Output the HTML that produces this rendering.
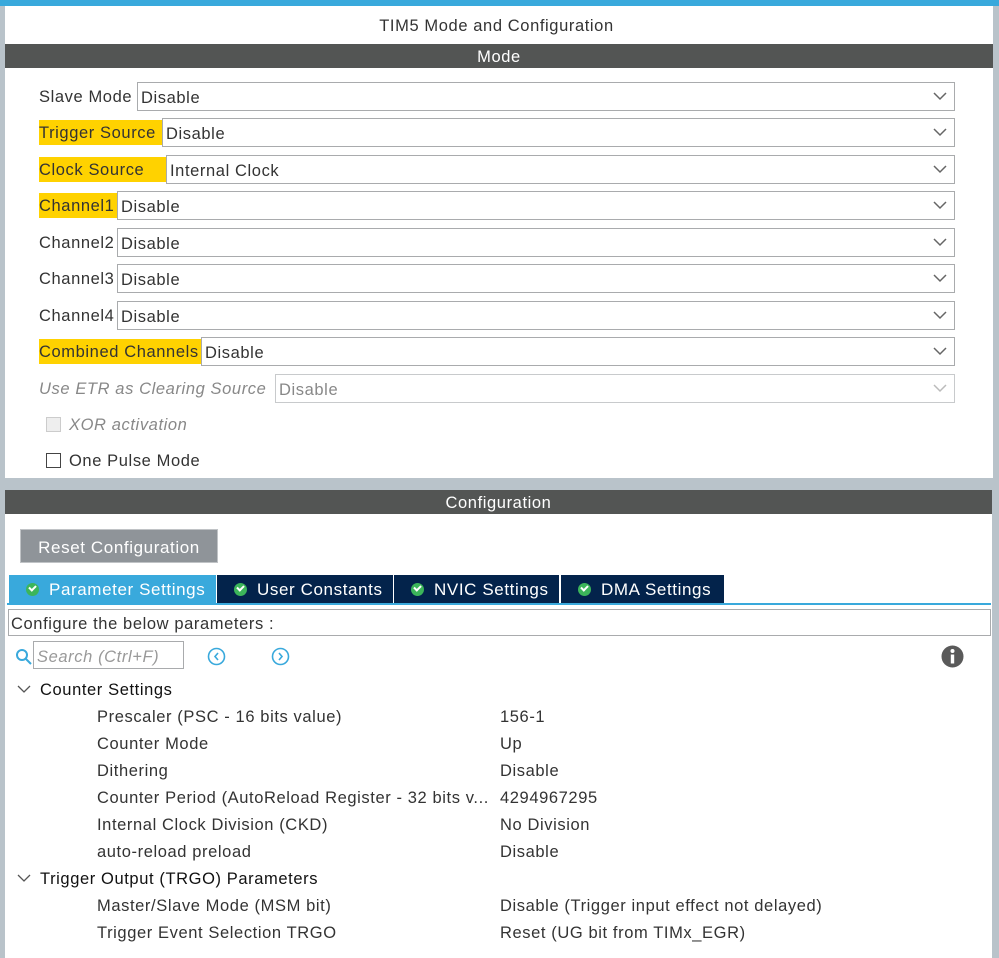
<!DOCTYPE html><html><head><style>
body{margin:0;width:999px;height:958px;background:#b9c3ca;position:relative;overflow:hidden;font-family:"Liberation Sans",sans-serif;font-size:16.5px;letter-spacing:0.6px;color:#333}
.a{position:absolute}
.top{left:0;top:0;width:999px;height:6px;background:#39a9dc}
.panel{background:#fff}
.hdr{background:#535554;color:#fff;text-align:center;height:24px;line-height:26px}
.lab{position:absolute;left:39px;height:25px;line-height:27px;white-space:nowrap}
.hl{background:#ffd200}
.sel{position:absolute;right:44px;height:27px;border:1px solid #a9abad;line-height:30px;padding-left:3px;background:#fff}
.sel svg{position:absolute;right:7px;top:9px}
.tab{position:absolute;top:575px;height:28px;line-height:29px;color:#fff;background:#03234b;font-size:17px;white-space:nowrap}
.ck{display:inline-block;width:13px;height:13px;border-radius:50%;background:#3cb55a;vertical-align:-1px;margin:0 10px 0 17px;position:relative}
.ck:after{content:"";position:absolute;left:3px;top:2px;width:5px;height:3px;border-left:2px solid #fff;border-bottom:2px solid #fff;transform:rotate(-45deg)}
.tr{position:absolute;left:97px;white-space:nowrap}
.tv{position:absolute;left:500px;white-space:nowrap}
</style></head><body>
<div class="a top"></div>
<div class="a panel" style="left:5px;top:6px;width:988px;height:472px"></div>
<div class="a" style="left:0;top:17px;width:993px;text-align:center">TIM5 Mode and Configuration</div>
<div class="a hdr" style="left:5px;top:44px;width:988px">Mode</div>

<div class="lab" style="top:84px">Slave Mode</div><div class="sel" style="left:137px;top:82px;right:44px">Disable<svg width="14" height="9"><path d="M1 1L7 7L13 1" fill="none" stroke="#666" stroke-width="1.5"/></svg></div>
<div class="lab hl" style="top:120px;width:123px">Trigger Source</div><div class="sel" style="left:162px;top:118px">Disable<svg width="14" height="9"><path d="M1 1L7 7L13 1" fill="none" stroke="#666" stroke-width="1.5"/></svg></div>
<div class="lab hl" style="top:157px;width:127px">Clock Source</div><div class="sel" style="left:166px;top:155px">Internal Clock<svg width="14" height="9"><path d="M1 1L7 7L13 1" fill="none" stroke="#666" stroke-width="1.5"/></svg></div>
<div class="lab hl" style="top:193px;width:78px">Channel1</div><div class="sel" style="left:117px;top:191px">Disable<svg width="14" height="9"><path d="M1 1L7 7L13 1" fill="none" stroke="#666" stroke-width="1.5"/></svg></div>
<div class="lab" style="top:230px">Channel2</div><div class="sel" style="left:117px;top:228px">Disable<svg width="14" height="9"><path d="M1 1L7 7L13 1" fill="none" stroke="#666" stroke-width="1.5"/></svg></div>
<div class="lab" style="top:266px">Channel3</div><div class="sel" style="left:117px;top:264px">Disable<svg width="14" height="9"><path d="M1 1L7 7L13 1" fill="none" stroke="#666" stroke-width="1.5"/></svg></div>
<div class="lab" style="top:303px">Channel4</div><div class="sel" style="left:117px;top:301px">Disable<svg width="14" height="9"><path d="M1 1L7 7L13 1" fill="none" stroke="#666" stroke-width="1.5"/></svg></div>
<div class="lab hl" style="top:339px;width:162px">Combined Channels</div><div class="sel" style="left:201px;top:337px">Disable<svg width="14" height="9"><path d="M1 1L7 7L13 1" fill="none" stroke="#666" stroke-width="1.5"/></svg></div>
<div class="lab" style="top:376px;color:#888;font-style:italic">Use ETR as Clearing Source</div><div class="sel" style="left:275px;top:374px;color:#888;border-color:#c8cacc">Disable<svg width="14" height="9"><path d="M1 1L7 7L13 1" fill="none" stroke="#bbb" stroke-width="1.5"/></svg></div>
<div class="a" style="left:46px;top:417px;width:13px;height:13px;border:1px solid #ccc;background:#eee"></div>
<div class="a" style="left:69px;top:416px;color:#888;font-style:italic">XOR activation</div>
<div class="a" style="left:46px;top:453px;width:13px;height:13px;border:1px solid #444"></div>
<div class="a" style="left:69px;top:452px">One Pulse Mode</div>

<div class="a panel" style="left:5px;top:490px;width:987px;height:468px"></div>
<div class="a hdr" style="left:5px;top:490px;width:987px">Configuration</div>
<div class="a" style="left:20px;top:529px;width:198px;height:34px;background:#8f9499;border:1px solid #c0c3c6;box-sizing:border-box;color:#fff;font-size:17px;line-height:35px;text-align:center">Reset Configuration</div>
<div class="tab" style="left:9px;width:207px;background:#39a9dc"><span class="ck"></span>Parameter Settings</div>
<div class="tab" style="left:217px;width:176px"><span class="ck"></span>User Constants</div>
<div class="tab" style="left:394px;width:165px"><span class="ck"></span>NVIC Settings</div>
<div class="tab" style="left:561px;width:163px"><span class="ck"></span>DMA Settings</div>
<div class="a" style="left:7px;top:603px;width:984px;height:2px;background:#39a9dc"></div>
<div class="a" style="left:8px;top:609px;height:25px;border:1px solid #a9abad;line-height:28px;padding-left:2px;width:979px">Configure the below parameters :</div>
<svg class="a" style="left:15px;top:648px" width="18" height="18"><circle cx="7" cy="7" r="5" fill="none" stroke="#39a9dc" stroke-width="2"/><path d="M11 11L16 16" stroke="#39a9dc" stroke-width="2"/></svg>
<div class="a" style="left:33px;top:641px;height:28px;border:1px solid #a9abad;color:#999;font-style:italic;line-height:30px;padding-left:3px;box-sizing:border-box;width:151px;white-space:nowrap;overflow:hidden">Search (Ctrl+F)</div>
<svg class="a" style="left:207px;top:647px" width="19" height="19"><circle cx="9.5" cy="9.5" r="8" fill="none" stroke="#39a9dc" stroke-width="1.6"/><path d="M11 6L8 9.5L11 13" fill="none" stroke="#39a9dc" stroke-width="1.6"/></svg>
<svg class="a" style="left:271px;top:647px" width="19" height="19"><circle cx="9.5" cy="9.5" r="8" fill="none" stroke="#39a9dc" stroke-width="1.6"/><path d="M8 6L11 9.5L8 13" fill="none" stroke="#39a9dc" stroke-width="1.6"/></svg>
<svg class="a" style="left:941px;top:645px" width="23" height="23"><circle cx="11.5" cy="11.5" r="11" fill="#5a5a5a"/><circle cx="11.5" cy="6" r="2" fill="#fff"/><rect x="9.8" y="9.5" width="3.4" height="9" fill="#fff"/></svg>
<svg class="a" style="left:17px;top:685px" width="14" height="9"><path d="M1 1L7 7L13 1" fill="none" stroke="#555" stroke-width="1.3"/></svg>
<div class="a" style="left:40px;top:681px;color:#111">Counter Settings</div>
<div class="tr" style="top:708px">Prescaler (PSC - 16 bits value)</div><div class="tv" style="top:708px">156-1</div>
<div class="tr" style="top:735px">Counter Mode</div><div class="tv" style="top:735px">Up</div>
<div class="tr" style="top:762px">Dithering</div><div class="tv" style="top:762px">Disable</div>
<div class="tr" style="top:789px">Counter Period (AutoReload Register - 32 bits v...</div><div class="tv" style="top:789px">4294967295</div>
<div class="tr" style="top:816px">Internal Clock Division (CKD)</div><div class="tv" style="top:816px">No Division</div>
<div class="tr" style="top:843px">auto-reload preload</div><div class="tv" style="top:843px">Disable</div>
<svg class="a" style="left:17px;top:874px" width="14" height="9"><path d="M1 1L7 7L13 1" fill="none" stroke="#555" stroke-width="1.3"/></svg>
<div class="a" style="left:40px;top:870px;color:#111">Trigger Output (TRGO) Parameters</div>
<div class="tr" style="top:897px">Master/Slave Mode (MSM bit)</div><div class="tv" style="top:897px">Disable (Trigger input effect not delayed)</div>
<div class="tr" style="top:924px">Trigger Event Selection TRGO</div><div class="tv" style="top:924px">Reset (UG bit from TIMx_EGR)</div>
</body></html>
